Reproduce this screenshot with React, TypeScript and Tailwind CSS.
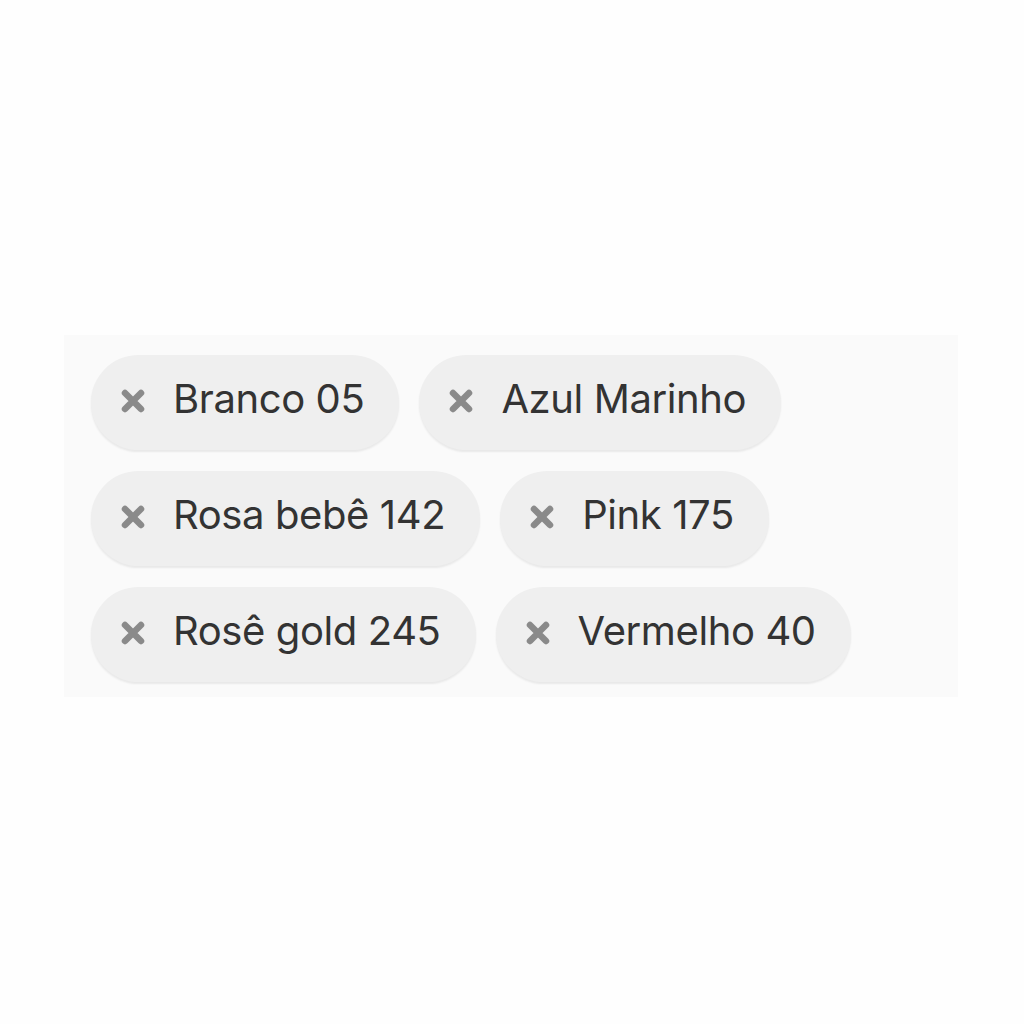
import React from "react";

const tags = [
  ["Branco 05", "Azul Marinho"],
  ["Rosa bebê 142", "Pink 175"],
  ["Rosê gold 245", "Vermelho 40"],
];

function XIcon() {
  return (
    <svg width="24" height="24" viewBox="0 0 24 24" className="-mt-[3px] shrink-0">
      <path d="M4 4 L20 20 M20 4 L4 20" stroke="#8a8a8a" strokeWidth="6.5" strokeLinecap="round" />
    </svg>
  );
}

function Chip({ label }: { label: string }) {
  return (
    <div className="flex h-[95px] items-center rounded-full bg-[#efefef] pl-[30px] pr-[35px] shadow-[0_2px_2px_rgba(0,0,0,0.07)]">
      <XIcon />
      <span className="ml-[28px] pb-[8px] text-[40px] leading-none tracking-[-0.4px] text-[#333333] [font-family:Inter,sans-serif]">
        {label}
      </span>
    </div>
  );
}

export default function App() {
  return (
    <div className="flex h-[1024px] w-[1024px] items-start bg-[#fefefe] pl-[64px] pt-[335px]">
      <div className="flex h-[362px] w-[894px] flex-col gap-[21px] bg-[#fafafa] pl-[27px] pt-[20px]">
        {tags.map((row, i) => (
          <div key={i} className="flex gap-[20px]">
            {row.map((t) => (
              <Chip key={t} label={t} />
            ))}
          </div>
        ))}
      </div>
    </div>
  );
}
